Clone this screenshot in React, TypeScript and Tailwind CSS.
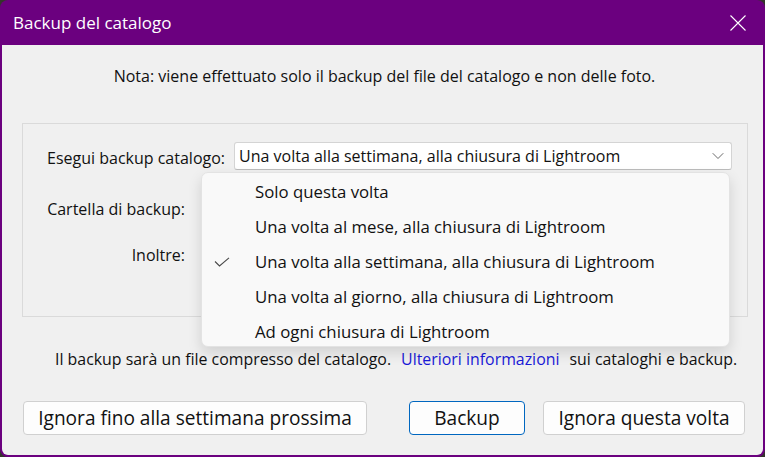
import { ChevronDown } from 'lucide-react';

const frequencies = [
  'Solo questa volta',
  'Una volta al mese, alla chiusura di Lightroom',
  'Una volta alla settimana, alla chiusura di Lightroom',
  'Una volta al giorno, alla chiusura di Lightroom',
  'Ad ogni chiusura di Lightroom',
];

const selected = 2;

function CheckMark() {
  return (
    <svg width="16" height="10" viewBox="0 0 16 10" fill="none" className="text-[#4a4a4a]">
      <path d="M1 4.5 L5.5 9 L15 0.8" stroke="currentColor" strokeWidth="1.1" />
    </svg>
  );
}

function CloseGlyph() {
  return (
    <svg width="16" height="16" viewBox="0 0 16 16" fill="none" className="text-white">
      <path d="M0.5 0.5 L15.5 15.5 M15.5 0.5 L0.5 15.5" stroke="currentColor" strokeWidth="1.1" />
    </svg>
  );
}

export default function App() {
  return (
    <div className="w-[765px] h-[457px] bg-[#34352b] font-['Open_Sans',sans-serif] text-[#111]">
      <div className="relative flex flex-col h-full rounded-[8px] bg-[#6b007f] overflow-hidden">
        {/* Title bar */}
        <div className="flex items-center justify-between h-[45px] pl-[13px] pr-[19px] shrink-0">
          <span className="text-white text-[17px] leading-none">Backup del catalogo</span>
          <CloseGlyph />
        </div>

        {/* Dialog body */}
        <div className="flex flex-col flex-1 mx-[2px] mb-[2px] bg-[#f0f0f0] rounded-b-[6px]">
          <p className="pt-[21px] text-center text-[16px] leading-[20px] pl-[4px]">
            Nota: viene effettuato solo il backup del file del catalogo e non delle foto.
          </p>

          <div className="mt-[37px] ml-[20px] w-[726px] h-[194px] border border-[#dadada]">
            <div className="flex items-start pt-[18px] pl-[24px] pr-[15px]">
              <span className="text-[16px] leading-[28px] pt-[2px]">Esegui backup catalogo:</span>
              <div className="ml-[9px] flex-1 h-[28px] flex items-center justify-between bg-white border border-[#d4d4d4] border-b-[#bcbcbc] rounded-[3px] pl-[4px] pr-[3px]">
                <span className="text-[16px] leading-[26px]">{frequencies[selected]}</span>
                <ChevronDown size={20} strokeWidth={1.1} className="text-[#5c5c5c]" />
              </div>
            </div>
            <div className="mt-[23px] pl-[24px] w-[162px] text-right text-[16px] leading-[28px]">Cartella di backup:</div>
            <div className="mt-[18px] pl-[24px] w-[162px] text-right text-[16px] leading-[28px]">Inoltre:</div>
          </div>

          <div className="mt-[32px] flex pl-[53px] text-[15.9px] leading-[20px] whitespace-nowrap">
            <span>Il backup sarà un file compresso del catalogo.</span>
            <a className="ml-[10px] text-[#1a1ad8]">Ulteriori informazioni</a>
            <span className="ml-[10px]">sui cataloghi e backup.</span>
          </div>

          <div className="mt-[32px] flex items-center pl-[21px] pr-[18px] text-[19.1px]">
            <button className="w-[344px] h-[34px] bg-[#fdfdfd] border border-[#d0d0d0] rounded-[4px]">
              Ignora fino alla settimana prossima
            </button>
            <button className="ml-[42px] w-[116px] h-[34px] bg-[#fdfdfd] border border-[#0067c0] rounded-[4px]">
              Backup
            </button>
            <button className="ml-[18px] w-[202px] h-[34px] bg-[#fdfdfd] border border-[#d0d0d0] rounded-[4px]">
              Ignora questa volta
            </button>
          </div>
        </div>

        {/* Open frequency list */}
        <div className="absolute left-[201px] top-[172px] w-[529px] h-[175px] pt-[1px] bg-[#f9f9f9] border border-[#e3e3e3] rounded-[7px] shadow-[0_6px_14px_rgba(0,0,0,0.13)]">
          {frequencies.map((f, i) => (
            <div key={f} className="relative h-[35px] flex items-center pl-[53px] text-[16.8px]">
              {i === selected && (
                <span className="absolute left-[12px] top-[13px]">
                  <CheckMark />
                </span>
              )}
              {f}
            </div>
          ))}
        </div>
      </div>
    </div>
  );
}
